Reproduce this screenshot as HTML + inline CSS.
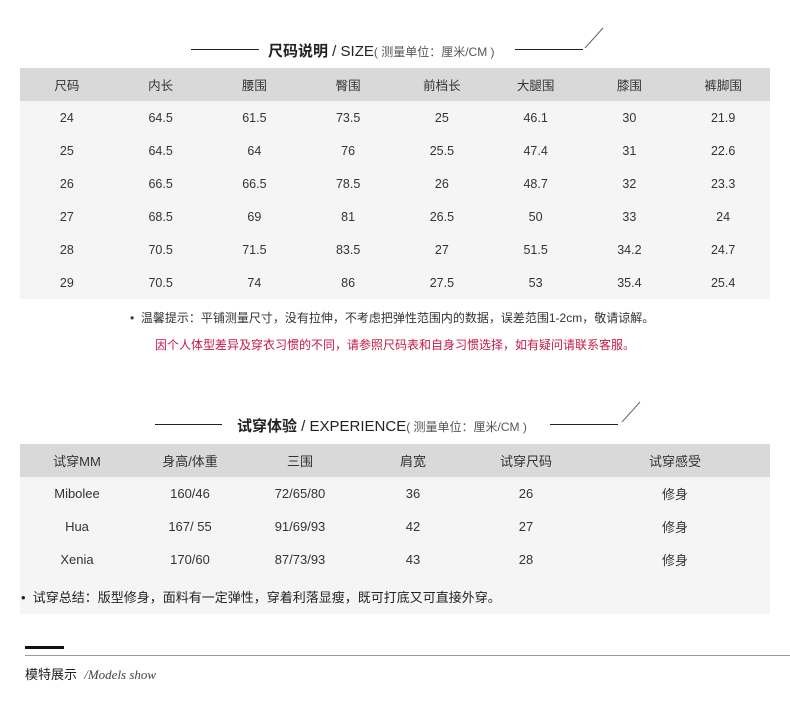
<!DOCTYPE html>
<html><head><meta charset="utf-8"><style>
*{margin:0;padding:0;box-sizing:border-box}
body{width:790px;height:707px;background:#fff;font-family:"Liberation Sans","Noto Sans CJK SC",sans-serif;color:#333;position:relative;overflow:hidden}
.abs{position:absolute}
.ln{position:absolute;height:1px;background:#222}
.title{position:absolute;font-size:15px;white-space:nowrap;color:#222}
.title b{font-weight:bold}
.title small{font-size:12px;color:#555}
table{position:absolute;border-collapse:collapse;font-size:12.5px;color:#333}
td{text-align:center;padding:0;height:33px}
tr.h td{background:#d9d9d9}
tbody tr.b td{background:#f5f5f5}
</style></head><body>
<div class="ln" style="left:191px;top:49px;width:68px"></div>
<div class="title" style="left:268px;top:40px"><b>尺码说明</b> / SIZE<small>( 测量单位：厘米/CM )</small></div>
<div class="ln" style="left:515px;top:49px;width:68px"></div>
<svg class="abs" style="left:580px;top:24px" width="30" height="30"><line x1="5" y1="24" x2="23" y2="4" stroke="#666" stroke-width="1"/></svg>

<table style="left:20px;top:68px;width:750px;table-layout:fixed">
<tr class="h"><td>尺码</td><td>内长</td><td>腰围</td><td>臀围</td><td>前档长</td><td>大腿围</td><td>膝围</td><td>裤脚围</td></tr>
<tr class="b"><td>24</td><td>64.5</td><td>61.5</td><td>73.5</td><td>25</td><td>46.1</td><td>30</td><td>21.9</td></tr>
<tr class="b"><td>25</td><td>64.5</td><td>64</td><td>76</td><td>25.5</td><td>47.4</td><td>31</td><td>22.6</td></tr>
<tr class="b"><td>26</td><td>66.5</td><td>66.5</td><td>78.5</td><td>26</td><td>48.7</td><td>32</td><td>23.3</td></tr>
<tr class="b"><td>27</td><td>68.5</td><td>69</td><td>81</td><td>26.5</td><td>50</td><td>33</td><td>24</td></tr>
<tr class="b"><td>28</td><td>70.5</td><td>71.5</td><td>83.5</td><td>27</td><td>51.5</td><td>34.2</td><td>24.7</td></tr>
<tr class="b"><td>29</td><td>70.5</td><td>74</td><td>86</td><td>27.5</td><td>53</td><td>35.4</td><td>25.4</td></tr>
</table>

<div class="abs" style="left:130px;top:309px;font-size:12px;color:#333;white-space:nowrap">•&nbsp; 温馨提示：平铺测量尺寸，没有拉伸，不考虑把弹性范围内的数据，误差范围1-2cm，敬请谅解。</div>
<div class="abs" style="left:0;width:790px;text-align:center;top:336px;font-size:12px;color:#c8184b;white-space:nowrap">因个人体型差异及穿衣习惯的不同，请参照尺码表和自身习惯选择，如有疑问请联系客服。</div>

<div class="ln" style="left:155px;top:424px;width:67px"></div>
<div class="title" style="left:237px;top:415px"><b>试穿体验</b> / EXPERIENCE<small>( 测量单位：厘米/CM )</small></div>
<div class="ln" style="left:550px;top:424px;width:68px"></div>
<svg class="abs" style="left:615px;top:398px" width="30" height="30"><line x1="7" y1="24" x2="25" y2="4" stroke="#666" stroke-width="1"/></svg>

<table style="left:20px;top:444px;width:750px;table-layout:fixed;font-size:13px">
<colgroup><col style="width:114px"><col style="width:112px"><col style="width:108px"><col style="width:118px"><col style="width:108px"><col style="width:190px"></colgroup>
<tr class="h"><td>试穿MM</td><td>身高/体重</td><td>三围</td><td>肩宽</td><td>试穿尺码</td><td>试穿感受</td></tr>
<tr class="b"><td>Mibolee</td><td>160/46</td><td>72/65/80</td><td>36</td><td>26</td><td>修身</td></tr>
<tr class="b"><td>Hua</td><td>167/ 55</td><td>91/69/93</td><td>42</td><td>27</td><td>修身</td></tr>
<tr class="b"><td>Xenia</td><td>170/60</td><td>87/73/93</td><td>43</td><td>28</td><td>修身</td></tr>
<tr class="b"><td colspan="6" style="height:38px;text-align:left;position:relative"><span style="position:absolute;left:1px;top:11px;white-space:nowrap;color:#222">•&nbsp; 试穿总结：版型修身，面料有一定弹性，穿着利落显瘦，既可打底又可直接外穿。</span></td></tr>
</table>

<div class="abs" style="left:25px;top:646px;width:39px;height:3px;background:#111"></div>
<div class="abs" style="left:25px;top:655px;width:765px;height:1px;background:#999"></div>
<div class="abs" style="left:25px;top:664px;font-size:13px;color:#222;white-space:nowrap">模特展示 &nbsp;<span style="font-family:'Liberation Serif',serif;font-style:italic;font-size:13px;color:#444">/Models show</span></div>
</body></html>
